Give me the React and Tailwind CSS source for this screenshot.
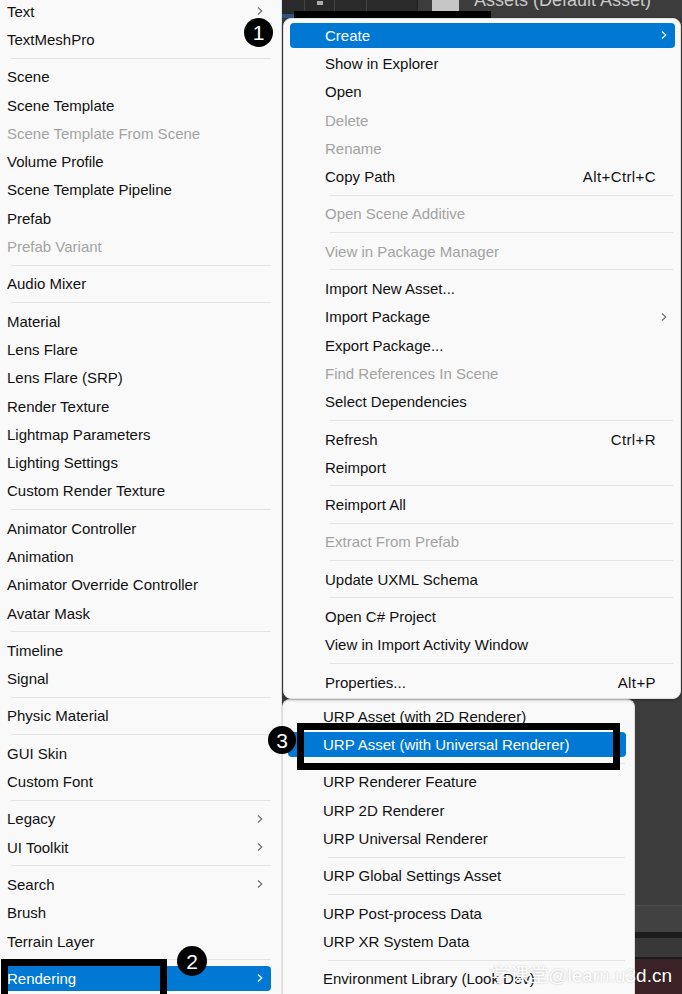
import React from "react";

// "---" marks a separator line
const assetTypes = [
  { label: "Text", arrow: true },
  { label: "TextMeshPro" },
  "---",
  { label: "Scene" },
  { label: "Scene Template" },
  { label: "Scene Template From Scene", disabled: true },
  { label: "Volume Profile" },
  { label: "Scene Template Pipeline" },
  { label: "Prefab" },
  { label: "Prefab Variant", disabled: true },
  "---",
  { label: "Audio Mixer" },
  "---",
  { label: "Material" },
  { label: "Lens Flare" },
  { label: "Lens Flare (SRP)" },
  { label: "Render Texture" },
  { label: "Lightmap Parameters" },
  { label: "Lighting Settings" },
  { label: "Custom Render Texture" },
  "---",
  { label: "Animator Controller" },
  { label: "Animation" },
  { label: "Animator Override Controller" },
  { label: "Avatar Mask" },
  "---",
  { label: "Timeline" },
  { label: "Signal" },
  "---",
  { label: "Physic Material" },
  "---",
  { label: "GUI Skin" },
  { label: "Custom Font" },
  "---",
  { label: "Legacy", arrow: true },
  { label: "UI Toolkit", arrow: true },
  "---",
  { label: "Search", arrow: true },
  { label: "Brush" },
  { label: "Terrain Layer" },
  "---",
  { label: "Rendering", arrow: true, active: true },
];

const contextItems = [
  { label: "Create", arrow: true, active: true },
  { label: "Show in Explorer" },
  { label: "Open" },
  { label: "Delete", disabled: true },
  { label: "Rename", disabled: true },
  { label: "Copy Path", shortcut: "Alt+Ctrl+C" },
  "---",
  { label: "Open Scene Additive", disabled: true },
  "---",
  { label: "View in Package Manager", disabled: true },
  "---",
  { label: "Import New Asset..." },
  { label: "Import Package", arrow: true },
  { label: "Export Package..." },
  { label: "Find References In Scene", disabled: true },
  { label: "Select Dependencies" },
  "---",
  { label: "Refresh", shortcut: "Ctrl+R" },
  { label: "Reimport" },
  "---",
  { label: "Reimport All" },
  "---",
  { label: "Extract From Prefab", disabled: true },
  "---",
  { label: "Update UXML Schema" },
  "---",
  { label: "Open C# Project" },
  { label: "View in Import Activity Window" },
  "---",
  { label: "Properties...", shortcut: "Alt+P" },
];

const renderingItems = [
  { label: "URP Asset (with 2D Renderer)" },
  { label: "URP Asset (with Universal Renderer)", active: true },
  "---",
  { label: "URP Renderer Feature" },
  { label: "URP 2D Renderer" },
  { label: "URP Universal Renderer" },
  "---",
  { label: "URP Global Settings Asset" },
  "---",
  { label: "URP Post-process Data" },
  { label: "URP XR System Data" },
  "---",
  { label: "Environment Library (Look Dev)" },
];

function Chevron({ white }) {
  return (
    <svg width="6" height="10" viewBox="0 0 6 10" fill="none" stroke={white ? "#ffffff" : "#6a6a6a"} strokeWidth="1.1">
      <polyline points="1,1.5 4.8,5 1,8.5" />
    </svg>
  );
}

function MenuList({ items, rowClass, sepClass }) {
  return items.map((item, i) => {
    if (item === "---") {
      return (
        <div key={i} className="h-[9px] flex items-center">
          <div className={`h-px flex-1 bg-[#e3e3e3] ${sepClass}`} />
        </div>
      );
    }
    return (
      <div key={i} className="h-[28.3px] flex items-center">
        <div
          className={`flex-1 h-[25px] flex items-center rounded-[4px] ${rowClass} ${
            item.active ? "bg-[#0078d4] text-white" : item.disabled ? "text-[#a3a3a3]" : "text-[#111111]"
          }`}
        >
          <span className="flex-1 leading-none whitespace-nowrap">{item.label}</span>
          {item.shortcut && <span className="mr-[11px] leading-none tracking-[0.4px]">{item.shortcut}</span>}
          {item.arrow && <Chevron white={item.active} />}
        </div>
      </div>
    );
  });
}

function Badge({ n, className }) {
  return (
    <div className={`absolute rounded-full bg-black text-white flex items-center justify-center text-[21px] leading-none ${className}`}>
      {n}
    </div>
  );
}

export default function App() {
  return (
    <div className="relative w-[682px] h-[994px] overflow-hidden flex bg-[#3a3a3a] font-['Liberation_Sans',Arial,sans-serif] text-[15px]">
      {/* Create asset submenu */}
      <div className="w-[282px] shrink-0 bg-[#f9f9f9] border-r border-[#e2e2e2]">
        <div className="-mt-[3px]">
          <MenuList items={assetTypes} rowClass="ml-[2px] mr-[10px] pl-[5px] pr-[8px]" sepClass="ml-[11px] mr-[10px]" />
        </div>
      </div>

      <div className="w-[400px] flex flex-col">
        {/* editor strip behind the menus */}
        <div className="h-[18px] flex overflow-hidden shrink-0">
          <div className="w-[135px] flex flex-col bg-[#2a2a2a]">
            <div className="flex-1 flex">
              <div className="w-[23px] border-r border-[#444]" />
              <div className="w-[30px] border-r border-[#444] flex justify-center">
                <div className="w-[6px] h-[4px] mt-[1px] bg-[#aaa]" />
              </div>
              <div className="w-[32px] border-r border-[#444]" />
              <div className="flex-1" />
            </div>
            <div className="h-[4px] bg-[#2f5478]" />
          </div>
          <div className="flex-1 bg-[#3c3c3c] flex items-start border-l border-[#222]">
            <div className="ml-[14px] w-[27px] h-[14px] bg-[#c6c6c6] rounded-b-[2px]" />
            <span className="ml-[15px] -mt-[9px] text-[18px] leading-none text-[#c8c8c8] whitespace-nowrap">
              Assets (Default Asset)
            </span>
          </div>
        </div>

        {/* project context menu */}
        <div className="ml-[1px] w-[398px] shrink-0 bg-[#f9f9f9] border border-[#dedede] rounded-[8px] pt-[2px] pb-[2px] shadow-[0_1px_3px_rgba(0,0,0,0.3)] relative z-10">
          <MenuList items={contextItems} rowClass="ml-[6px] mr-[5px] pl-[35px] pr-[8px]" sepClass="ml-[46px] mr-[7px]" />
        </div>

        <div className="flex flex-1">
          {/* Rendering submenu */}
          <div className="w-[353px] shrink-0 bg-[#f9f9f9] border border-b-0 border-[#dedede] rounded-t-[8px] pt-[2px]">
            <MenuList items={renderingItems} rowClass="ml-[5px] mr-[8px] pl-[35px] pr-[8px]" sepClass="ml-[45px] mr-[9px]" />
          </div>
          <div className="flex-1 flex flex-col">
            <div className="h-[206px] bg-[#3c3c3c]" />
            <div className="h-px bg-[#4c4c4c]" />
            <div className="h-[26px] bg-[#414141]" />
            <div className="h-[6px] bg-[#1c1c1c]" />
            <div className="h-[19px] bg-[#383838]" />
            <div className="h-[2px] bg-[#1a1a1a]" />
            <div className="flex-1 bg-[#3a2226]" />
          </div>
        </div>
      </div>

      {/* step annotations */}
      <div className="absolute left-[294px] top-[11px] w-[197px] h-[41px] border-[7px] border-black" />
      <div className="absolute left-[1px] top-[959px] w-[166px] h-[42px] border-[7px] border-black" />
      <div className="absolute left-[297px] top-[723px] w-[323px] h-[47px] border-[7px] border-black" />
      <Badge n="1" className="left-[244px] top-[18px] w-[29px] h-[29px]" />
      <Badge n="2" className="left-[177px] top-[946px] w-[30px] h-[30px]" />
      <Badge n="3" className="left-[268px] top-[726px] w-[28px] h-[28px]" />

      <div className="absolute right-[10px] top-[966px] text-[19px] leading-none text-white whitespace-nowrap font-['Liberation_Sans','Noto_Sans_CJK_SC',sans-serif] [text-shadow:0_0_2px_rgba(0,0,0,0.25)]">
        学课堂@learn.u3d.cn
      </div>
    </div>
  );
}
